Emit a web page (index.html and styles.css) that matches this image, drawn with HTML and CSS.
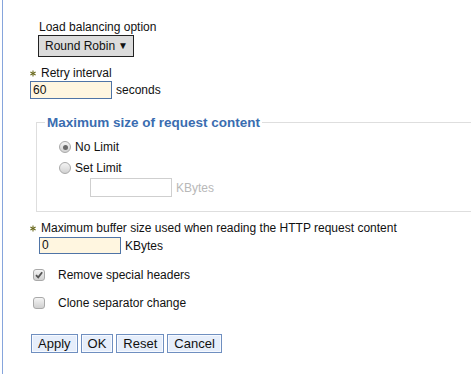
FILE: index.html
```html
<!DOCTYPE html>
<html>
<head>
<meta charset="utf-8">
<link rel="stylesheet" href="styles.css">
</head>
<body>
<div class="frame">
  <div class="lb">
    <div class="label">Load balancing option</div>
    <div class="select"><span class="sel-text">Round Robin</span><span class="arrow">&#9660;</span></div>
  </div>

  <div class="retry">
    <div class="label req"><svg class="star" width="6" height="7" viewBox="0 0 6 7"><g stroke="#6b6a1e" stroke-width="1.1"><line x1="3" y1="0.5" x2="3" y2="6.5"/><line x1="0.4" y1="2" x2="5.6" y2="5"/><line x1="0.4" y1="5" x2="5.6" y2="2"/></g></svg><span>Retry interval</span></div>
    <div class="row"><div class="input">60</div><span class="unit">seconds</span></div>
  </div>

  <fieldset class="box">
    <legend>Maximum size of request content</legend>
    <div class="opts">
      <div class="opt"><span class="radio on"><span class="dot"></span></span><span>No Limit</span></div>
      <div class="opt"><span class="radio"></span><span>Set Limit</span></div>
      <div class="row limit"><div class="input dis"></div><span class="unit grey">KBytes</span></div>
    </div>
  </fieldset>

  <div class="buffer">
    <div class="label req"><svg class="star" width="6" height="7" viewBox="0 0 6 7"><g stroke="#6b6a1e" stroke-width="1.1"><line x1="3" y1="0.5" x2="3" y2="6.5"/><line x1="0.4" y1="2" x2="5.6" y2="5"/><line x1="0.4" y1="5" x2="5.6" y2="2"/></g></svg><span>Maximum buffer size used when reading the HTTP request content</span></div>
    <div class="row buf"><div class="input small">0</div><span class="unit">KBytes</span></div>
  </div>

  <div class="check first"><span class="cb"><svg width="10" height="10" viewBox="0 0 10 10"><path d="M2 5.2 L4.2 7.4 L8.2 2.2" fill="none" stroke="#555" stroke-width="1.8"/></svg></span><span>Remove special headers</span></div>
  <div class="check second"><span class="cb"></span><span>Clone separator change</span></div>

  <div class="buttons">
    <button class="btn">Apply</button>
    <button class="btn">OK</button>
    <button class="btn">Reset</button>
    <button class="btn">Cancel</button>
  </div>
</div>
</body>
</html>
```

FILE: styles.css
```css
html, body {
  margin: 0;
  padding: 0;
  background: #fff;
  overflow: hidden;
}
body {
  font-family: "Liberation Sans", Arial, sans-serif;
  font-size: 12px;
  color: #111;
}
.frame {
  margin-left: 2px;
  border-left: 1px solid #86a5dc;
  min-height: 374px;
  box-sizing: border-box;
  padding-top: 20px;
  display: flex;
  flex-direction: column;
  align-items: flex-start;
}
.label {
  line-height: 14px;
  height: 14px;
  white-space: nowrap;
}
.lb {
  margin-left: 35px;
}
.lb .label {
  padding-left: 1px;
}
.select {
  margin-top: 1px;
  width: 96px;
  height: 22px;
  box-sizing: border-box;
  border: 1px solid #222;
  background: #dcdcdc;
  display: flex;
  align-items: center;
  justify-content: space-between;
  padding: 0 5px 0 6px;
  font-size: 12px;
  white-space: nowrap;
}
.sel-text {
  flex: none;
}
.arrow {
  flex: none;
  font-size: 10px;
  line-height: 1;
}
.req {
  display: flex;
  align-items: center;
}
.star {
  margin-right: 5px;
}
.retry {
  margin-top: 9px;
  margin-left: 27px;
}
.row {
  display: flex;
  align-items: center;
}
.retry .row {
  margin-top: 1px;
}
.input {
  width: 82px;
  height: 18px;
  box-sizing: border-box;
  border: 1px solid #4f74a6;
  background: #fff6e0;
  padding-left: 2px;
  line-height: 16px;
}
.unit {
  margin-left: 4px;
}
.grey {
  color: #b8b8b8;
}
.box {
  margin: 16px 0 0 33px;
  width: 460px;
  box-sizing: border-box;
  border: 1px solid #dedede;
  padding: 0 0 14px 0;
}
.box legend {
  margin-left: 8px;
  padding: 0 2px;
  font-size: 13.5px;
  font-weight: bold;
  line-height: 15px;
  color: #3a6db0;
}
.opts {
  padding-left: 22px;
  margin-top: 7px;
}
.opt {
  display: flex;
  align-items: center;
  height: 20px;
  line-height: 20px;
}
.opt + .opt {
  margin-top: 1px;
}
.radio {
  width: 12px;
  height: 12px;
  box-sizing: border-box;
  border-radius: 50%;
  border: 1px solid #a9a9a9;
  background: linear-gradient(#f4f4f4, #d2d2d2);
  margin-right: 4px;
  display: flex;
  align-items: center;
  justify-content: center;
}
.radio .dot {
  width: 5px;
  height: 5px;
  border-radius: 50%;
  background: #6a6a6a;
}
.limit {
  margin-left: 31px;
}
.input.dis {
  border: 1px solid #cfcfcf;
  background: #fff;
  height: 19px;
}
.buffer {
  margin-top: 9px;
  margin-left: 27px;
}
.buf {
  margin-top: 2px;
  margin-left: 9px;
}
.input.small {
  height: 17px;
  line-height: 15px;
}
.check {
  display: flex;
  align-items: center;
  height: 20px;
  margin-left: 30px;
}
.check.first {
  margin-top: 11px;
}
.check.second {
  margin-top: 8px;
}
.cb {
  width: 12px;
  height: 12px;
  box-sizing: border-box;
  border: 1px solid #a9a9a9;
  border-radius: 3px;
  background: linear-gradient(#f4f4f4, #d0d0d0);
  margin-right: 13px;
  display: flex;
  align-items: center;
  justify-content: center;
}
.buttons {
  margin-top: 21px;
  margin-left: 28px;
  display: flex;
  gap: 3px;
}
.btn {
  font-family: "Liberation Sans", Arial, sans-serif;
  font-size: 13px;
  height: 19px;
  box-sizing: border-box;
  padding: 0 6px;
  margin: 0;
  border: 1px solid #6f8fc0;
  background: #e6eefb;
  box-shadow: inset 0 0 0 1px #f7faff;
  color: #111;
  line-height: 17px;
}
```
